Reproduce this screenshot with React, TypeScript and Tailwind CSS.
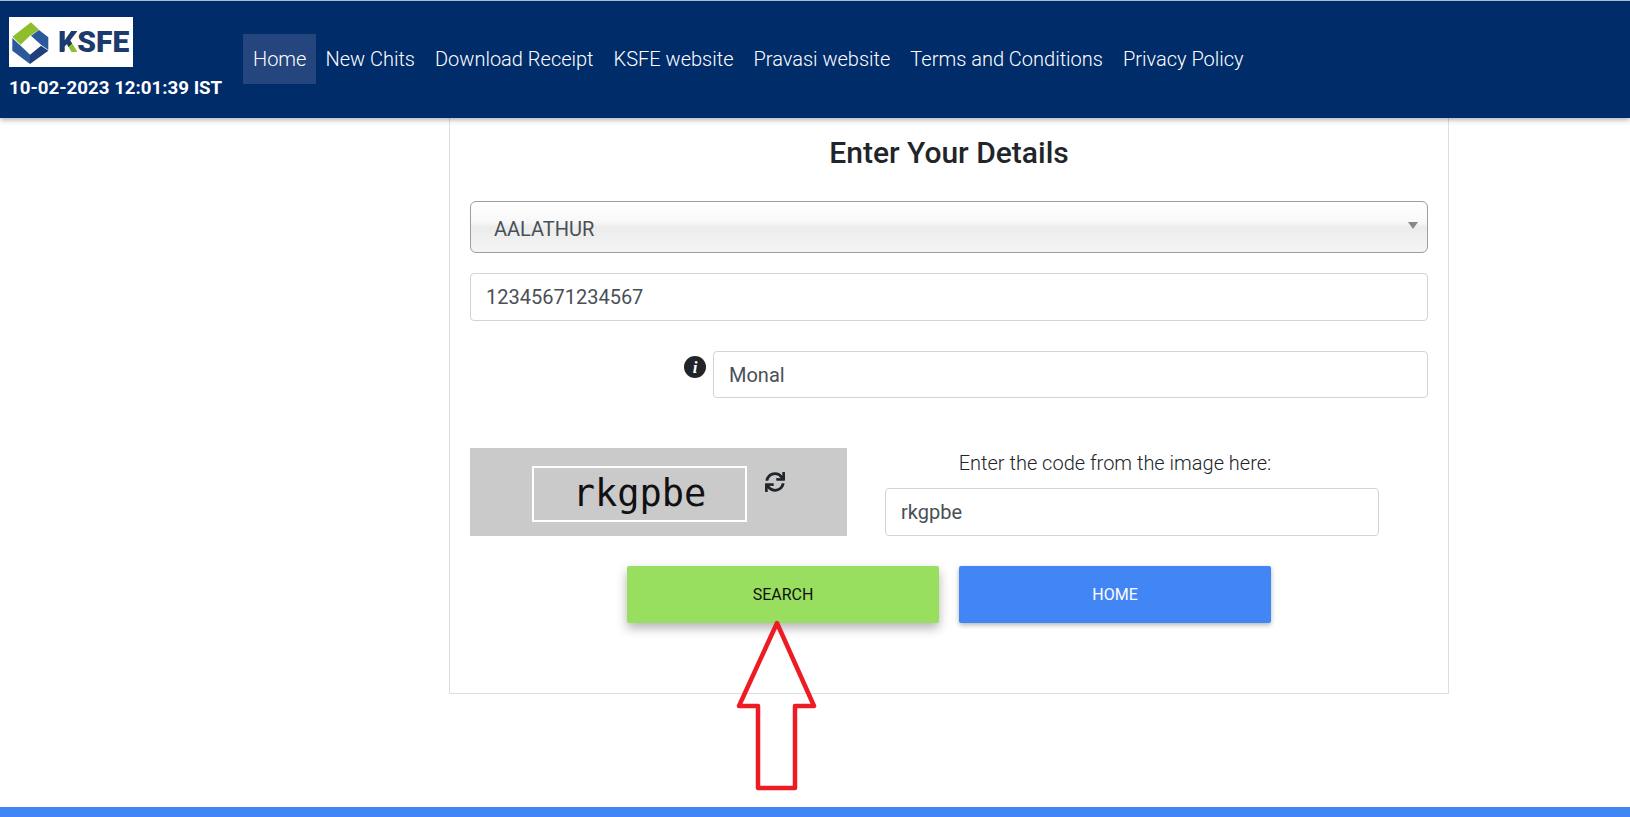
import { FaSync } from 'react-icons/fa'

const navItems = ['New Chits', 'Download Receipt', 'KSFE website', 'Pravasi website', 'Terms and Conditions', 'Privacy Policy']

function Logo() {
  return (
    <div className="flex h-[50px] w-[124px] items-center bg-white">
      <svg width="40" height="50" viewBox="12 9 120 150" className="shrink-0">
        <polygon points="22,68 78,25 102,47 75,65 47,92" fill="#8fbe2c" />
        <polygon points="22,72 47,95 75,122 75,150 22,110" fill="#2a5a9c" />
        <polygon points="102,48 130,70 130,108 108,92 78,65" fill="#2a5a9c" />
        <polygon points="130,110 75,150 75,122 108,95" fill="#1f3f7c" />
      </svg>
      <span className="ml-[9px] text-[30px] leading-none font-black text-[#1c3a6e]">
        <span className="bg-[linear-gradient(135deg,#1c3a6e_62%,#8fbe2c_62%)] bg-clip-text text-transparent">K</span>SFE
      </span>
    </div>
  )
}

function Header() {
  return (
    <header className="relative z-10 flex h-[118px] shrink-0 items-start border-t border-[#a9bcd6] bg-[#002c6a] pt-[16px] shadow-[0_2px_5px_rgba(0,0,0,0.3)]">
      <div className="ml-[9px] w-[234px] shrink-0">
        <Logo />
        <div className="mt-[10px] text-[18.7px] leading-[22px] font-bold text-white">10-02-2023 12:01:39 IST</div>
      </div>
      <nav className="mt-[17px] flex items-center text-[20px] font-light text-white">
        <a className="mr-[-1px] flex h-[50px] items-center bg-[#24457d] px-[10px]">Home</a>
        {navItems.map((item) => (
          <a key={item} className="flex h-[50px] items-center px-[10px]">{item}</a>
        ))}
      </nav>
    </header>
  )
}

function Field({ value, className }: { value: string; className: string }) {
  return (
    <div className={`flex items-center rounded-[4px] border border-[#ced4da] bg-white px-[15px] text-[20px] text-[#495057] ${className}`}>
      {value}
    </div>
  )
}

export default function App() {
  return (
    <div className="relative flex h-[817px] flex-col overflow-hidden bg-white font-['Roboto',sans-serif]">
      <Header />

      <main className="flex-1">
        <div className="mr-[181px] ml-[449px] h-[576px] border-x border-b border-[#dedede] px-[20px]">
          <h1 className="pt-[15px] text-center text-[30px] leading-[40px] font-medium text-[#212529]">Enter Your Details</h1>

          <div className="relative mt-[28px] flex h-[52px] items-center rounded-[6px] border border-[#9e9e9e] bg-[linear-gradient(#ffffff_0%,#f8f8f8_40%,#ececec_50%,#f4f4f4_100%)] pt-[4px] pl-[23px] text-[20px] text-[#495057]">
            AALATHUR
            <span className="absolute top-[20px] right-[9px] h-0 w-0 border-x-[5px] border-t-[7px] border-x-transparent border-t-[#888888]" />
          </div>

          <Field value="12345671234567" className="mt-[20px] h-[48px]" />

          <div className="mt-[30px] flex items-start justify-end">
            <svg width="22" height="22" viewBox="0 0 22 22" className="mt-[5px] mr-[7px]">
              <circle cx="11" cy="11" r="11" fill="#212529" />
              <text x="11" y="16.5" textAnchor="middle" fill="#ffffff" fontSize="17" fontWeight="700" fontStyle="italic" fontFamily="'Liberation Serif', serif">i</text>
            </svg>
            <Field value="Monal" className="h-[47px] w-[715px]" />
          </div>

          <div className="mt-[50px] flex items-start">
            <div className="flex h-[88px] w-[377px] items-start bg-[#cacaca] pt-[18px] pl-[62px]">
              <div className="flex h-[56px] w-[215px] items-center justify-center border-2 border-white font-['DejaVu_Sans_Mono',monospace] text-[37px] text-[#111111]">rkgpbe</div>
              <FaSync className="mt-[6px] ml-[18px] text-[#212529]" size={20} />
            </div>
            <div className="ml-[38px] w-[494px]">
              <div className="mb-[12px] h-[28px] pr-[34px] text-center text-[20px] leading-[30px] font-light text-[#212529]">Enter the code from the image here:</div>
              <Field value="rkgpbe" className="h-[48px]" />
            </div>
          </div>

          <div className="mt-[30px] ml-[157px] flex gap-[20px] text-[16px]">
            <button className="h-[57px] w-[312px] rounded-[2px] bg-[#98df5f] text-[#111111] shadow-[0_5px_11px_rgba(0,0,0,0.3)]">SEARCH</button>
            <button className="h-[57px] w-[312px] rounded-[2px] bg-[#4285f4] text-white shadow-[0_2px_5px_rgba(0,0,0,0.3)]">HOME</button>
          </div>
        </div>
      </main>

      <div className="h-[10px] shrink-0 bg-[#4285f4]" />

      {/* annotation arrow over the page */}
      <svg width="90" height="177" viewBox="0 0 90 177" className="absolute top-[618px] left-[733px]">
        <polygon points="44,5 81,88 62,88 62,170 25,170 25,88 6,88" fill="none" stroke="#ed1c24" strokeWidth="4.5" strokeLinejoin="round" />
      </svg>
    </div>
  )
}
